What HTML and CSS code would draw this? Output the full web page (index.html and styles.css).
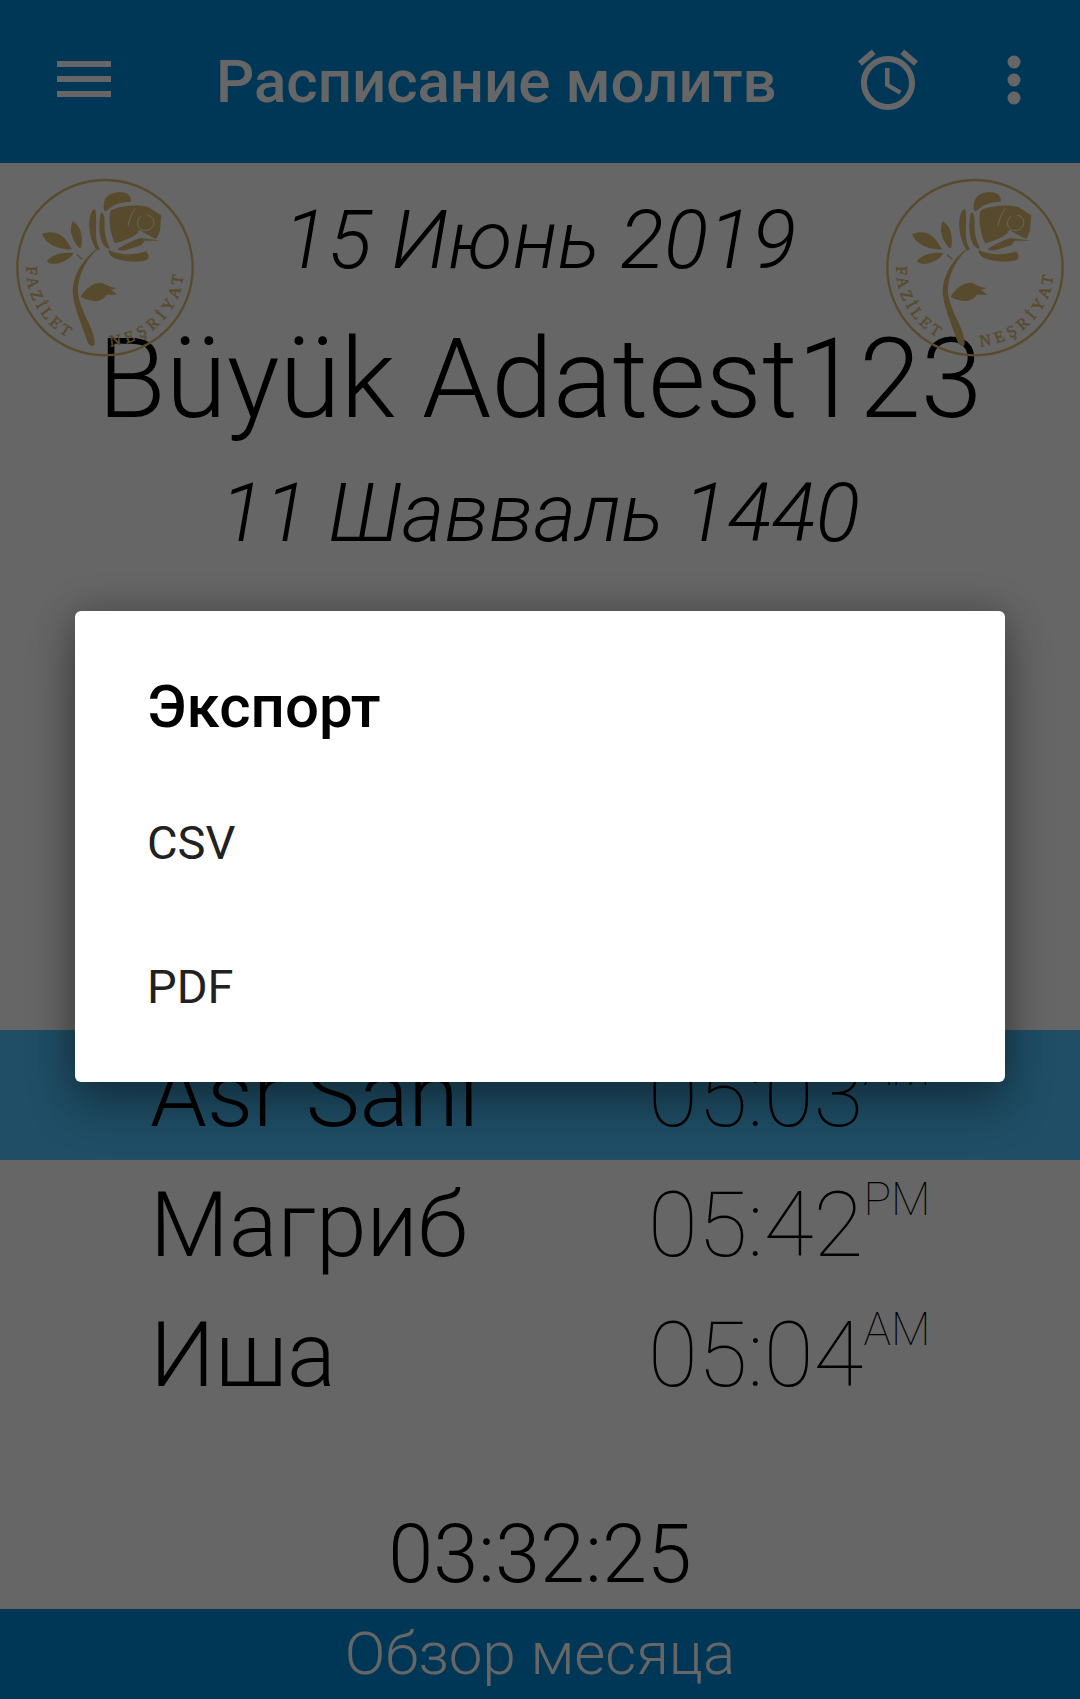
FILE: index.html
```html
<!DOCTYPE html>
<html lang="ru">
  <head>
    <meta charset="utf-8">
    <meta name="viewport" content="width=device-width,initial-scale=1">
    <title>Расписание молитв</title>
    <link rel="stylesheet" href="styles.css">
  </head>

  <body>
    <svg class="defs" width="0" height="0">
      <defs>
        <symbol id="rose_logo" viewBox="0 0 660 630">
          <circle cx="315" cy="323" r="263" fill="none" stroke-width="7"/>
          <!-- flower -->
          <path d="M312 150c-6-36 14-52 46-54 24 0 38 12 34 30-28 0-54 8-68 24-6 4-10 4-12 0z"/>
          <path d="M286 146c-14 4-20 28-18 58 2 26 12 56 24 68l8-4c-8-14-12-28-12-46 0-26 2-50-2-76z"/>
          <path d="M302 158c-6 34-6 64 4 88 4 10 12 20 24 20-10-22-18-46-16-76 0-14 0-24-6-32z"/>
          <path d="M334 150c30-14 84-18 112-8l38 24-4 46-10 24c-18-2-34-14-50-26-8 14-30 28-74 40-14-20-24-84-12-100z"/>
          <path d="M352 268c16-12 44-26 70-34l50 6 4 2-42 0-10 14-38 12c-14 4-24 6-34 0z"/>
          <path d="M326 270c30 14 70 18 112 4 10 10 10 20 2 26-30 10-70 4-98-6-10-6-18-14-16-24z"/>
          <g fill="none" stroke="#fff" stroke-width="3">
            <path d="M406 146c-12 14-18 32-22 52M424 168c-14 10-16 30-2 40 14 8 32 2 38-12 4-14-2-28-18-30"/>
            <path d="M412 212l40 18"/>
          </g>
          <!-- leaves -->
          <path d="M126 222c30-12 62-6 84 36l6 10c-34 2-78-12-90-46z"/>
          <path d="M218 184c22 12 32 40 26 78-2 4-6 2-10-2-18-22-28-50-16-76z"/>
          <path d="M142 300c24-20 50-24 78-20-14 24-50 36-70 30-6-2-10-6-8-10z"/>
          <path d="M232 282l16 14-2 4-16-14z"/>
          <!-- stem -->
          <path d="M288 268c-40 30-68 76-70 124 0 40 26 100 46 156 6 12 20 16 20 0 0-16-10-44-22-68-18-40-30-66-28-98 4-42 26-84 56-112z"/>
          <!-- bud -->
          <path d="M242 410c14-24 36-42 62-42 14 4 20 12 46 16l-16 6 18 14-32 0c-8 14-24 22-44 18-12-2-24-6-34-12z"/>
          <path id="logo_left" d="M79 315A236 236 0 0 0 210 536" fill="none" stroke="none"/>
          <path id="logo_right" d="M325 559A236 236 0 0 0 551 330" fill="none" stroke="none"/>
          <text class="logo_text" stroke-width="1.5"><textPath href="#logo_left" startOffset="4" textLength="258">FAZİLET</textPath></text>
          <text class="logo_text" stroke-width="1.5"><textPath href="#logo_right" startOffset="6" textLength="330">NEŞRİYAT</textPath></text>
        </symbol>
      </defs>
    </svg>

    <div class="screen">
      <header class="appbar">
        <svg class="icon_menu" viewBox="0 0 54 38">
          <rect x="0" y="0" width="54" height="6"/>
          <rect x="0" y="15" width="54" height="6"/>
          <rect x="0" y="30" width="54" height="6"/>
        </svg>
        <h1 class="appbar_title">Расписание молитв</h1>
        <svg class="icon_alarm" viewBox="0 0 24 24">
          <path d="M22 5.72l-4.6-3.86-1.29 1.53 4.6 3.86L22 5.72zM7.88 3.39L6.6 1.86 2 5.71l1.29 1.53 4.59-3.85zM12.5 8H11v6l4.75 2.85.75-1.23-4-2.37V8zM12 4c-4.97 0-9 4.03-9 9s4.03 9 9 9 9-4.03 9-9-4.03-9-9-9zm0 16c-3.87 0-7-3.13-7-7s3.13-7 7-7 7 3.13 7 7-3.13 7-7 7z"/>
        </svg>
        <svg class="icon_more" viewBox="0 0 14 50">
          <circle cx="7" cy="7" r="6.5"/>
          <circle cx="7" cy="25" r="6.5"/>
          <circle cx="7" cy="43" r="6.5"/>
        </svg>
      </header>

      <main class="content">
        <svg class="logo logo_l"><use href="#rose_logo"/></svg>
        <svg class="logo logo_r"><use href="#rose_logo"/></svg>

        <p class="date">15 Июнь 2019</p>
        <p class="city">Büyük Adatest123</p>
        <p class="date hijri">11 Шавваль 1440</p>

        <ul class="prayers">
          <li class="prayer current">
            <span class="prayer_name">Asr Sani</span>
            <span class="prayer_time">05:03<sup>AM</sup></span>
          </li>
          <li class="prayer">
            <span class="prayer_name">Магриб</span>
            <span class="prayer_time">05:42<sup>PM</sup></span>
          </li>
          <li class="prayer">
            <span class="prayer_name">Иша</span>
            <span class="prayer_time">05:04<sup>AM</sup></span>
          </li>
        </ul>

        <p class="countdown">03:32:25</p>
      </main>

      <footer class="bottombar">Обзор месяца</footer>
    </div>

    <div class="scrim">
      <div class="dialog">
        <h2 class="dialog_title">Экспорт</h2>
        <div class="dialog_item">CSV</div>
        <div class="dialog_item">PDF</div>
      </div>
    </div>
  </body>
</html>
```

FILE: styles.css
```css
* {
    box-sizing: border-box;
}
html, body {
    margin: 0;
    height: 100%;
}
body {
    font-family: Roboto, sans-serif;
    background: #fff;
    color: #000;
    overflow: hidden;
}
p, h1, h2, ul {
    margin: 0;
    padding: 0;
}
.defs {
    position: absolute;
}
.screen {
    display: flex;
    flex-direction: column;
    height: 1699px;
}

/* App bar */
.appbar {
    display: flex;
    align-items: center;
    height: 163px;
    flex: none;
    background: #008ad8;
    color: #fff;
    fill: #fff;
}
.icon_menu {
    width: 54px;
    height: 38px;
    margin-left: 57px;
    margin-top: -4px;
}
.appbar_title {
    width: 558px;
    margin-left: 105px;
    font-size: 60px;
    font-weight: 500;
    white-space: nowrap;
    line-height: 1;
}
.icon_alarm {
    width: 72px;
    height: 72px;
    margin-left: 78px;
    margin-top: -4px;
}
.icon_more {
    width: 14px;
    height: 50px;
    margin-left: 83px;
    margin-top: -4px;
}

/* Header texts */
.content {
    position: relative;
    flex: 1;
    display: flex;
    flex-direction: column;
    align-items: center;
}
.logo {
    position: absolute;
    top: -3px;
    width: 220px;
    height: 210px;
    fill: #dcbc70;
    stroke: #dcbc70;
    stroke-width: 0;
}
.logo_l {
    left: 0;
}
.logo_r {
    left: 870px;
}
.logo_text {
    font-family: "Liberation Serif", serif;
    font-size: 48px;
}
.date {
    margin-top: 32px;
    font-size: 82px;
    font-weight: 300;
    font-style: italic;
    line-height: 90px;
}
.city {
    font-size: 111px;
    font-weight: 300;
    line-height: 126px;
    margin-top: 31px;
}
.hijri {
    margin-top: 26px;
}

/* Prayer rows */
.prayers {
    list-style: none;
    width: 100%;
    margin-top: 472px;
}
.prayer {
    display: flex;
    align-items: baseline;
    height: 130px;
    padding-left: 150px;
    font-weight: 300;
}
.current {
    background: #4ec3ff;
}
.prayer_name {
    width: 498px;
    font-size: 91px;
    line-height: 130px;
}
.prayer_time {
    font-size: 91px;
    font-weight: 100;
    line-height: 130px;
}
.prayer_time sup {
    font-size: 46px;
    font-weight: 100;
    line-height: 0;
    vertical-align: 41px;
}
.countdown {
    margin-top: auto;
    margin-bottom: 7px;
    font-size: 81px;
    font-weight: 300;
    line-height: 94px;
}

/* Bottom bar */
.bottombar {
    flex: none;
    height: 90px;
    background: #008ad8;
    color: #fff;
    font-size: 60px;
    font-weight: 300;
    line-height: 90px;
    text-align: center;
}

/* Export dialog */
.scrim {
    position: absolute;
    inset: 0;
    background: rgba(0, 0, 0, .6);
}
.dialog {
    position: absolute;
    left: 75px;
    top: 611px;
    width: 930px;
    height: 471px;
    padding: 0 72px;
    background: #fff;
    border-radius: 6px;
    box-shadow: 0 24px 48px rgba(0, 0, 0, .3), 0 0 36px rgba(0, 0, 0, .25);
}
.dialog_title {
    height: 160px;
    padding-top: 63px;
    font-size: 60px;
    font-weight: 500;
    line-height: 66px;
    color: #000;
}
.dialog_item {
    height: 144px;
    font-size: 47px;
    line-height: 144px;
    color: #212121;
}
```
